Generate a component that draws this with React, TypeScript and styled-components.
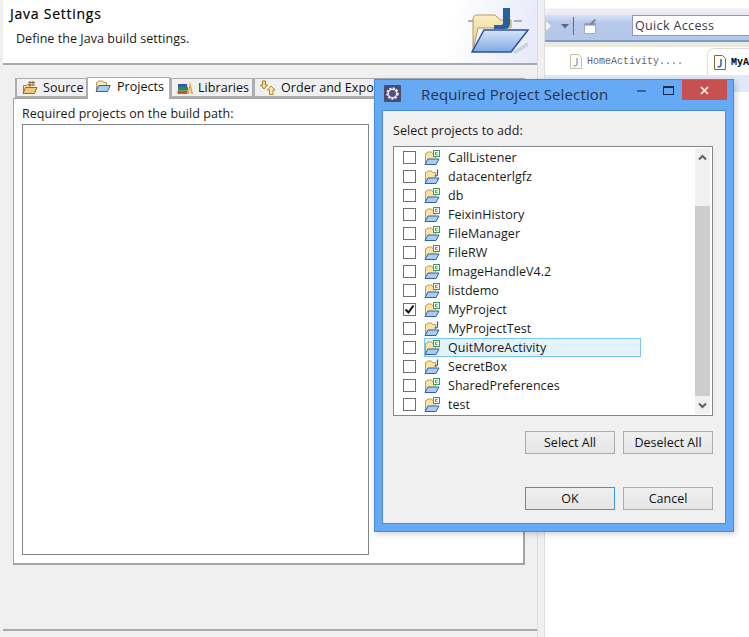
import React from 'react';
import styled, { createGlobalStyle } from 'styled-components';

const Global = createGlobalStyle`
  html, body { margin: 0; padding: 0; background: #fff; }
  body { font-family: "Open Sans", "Noto Sans", sans-serif; font-size: 12.5px; color: #1a1a1a; }
  * { box-sizing: border-box; }
`;

const Screen = styled.div`
  position: relative; width: 749px; height: 637px; overflow: hidden;
  display: flex; background: #fff;
`;

/* ---------- Left wizard page ---------- */
const WizardPane = styled.div`
  width: 538px; height: 637px; flex: none; display: flex; flex-direction: column;
  background: #f0f0f0; border-left: 3px solid #f0f0f0; border-right: 1px solid #dcdcdc;
`;
const Banner = styled.header`
  height: 65px; flex: none; display: flex; justify-content: space-between; padding-left: 7px;
  background: linear-gradient(100deg, #fff 83%, #e6e9f7 100%);
  border-bottom: 2px solid #a9a9a9;
`;
const BannerText = styled.div`
  display: flex; flex-direction: column;
`;
const BannerTitle = styled.div`
  font-weight: 500; font-size: 14px; color: #000; line-height: 18px; margin-top: 5px; letter-spacing: .75px;
  -webkit-text-stroke: .2px #000;
`;
const BannerSub = styled.div`
  line-height: 17px; margin: 7px 0 0 6px; font-size: 12.5px; letter-spacing: .05px;
`;
const BannerArt = styled.div`
  width: 64px; height: 54px; margin: 2px 7px 0 0; flex: none;
`;

const PageBody = styled.div`
  flex: 1; padding: 11px 12px 0 10px; display: flex; flex-direction: column;
`;
const TabRow = styled.div`
  display: flex; align-items: flex-end; height: 22px; margin-left: 2px; position: relative; z-index: 1;
`;
const Tab = styled.div<{ $active?: boolean; $w: number }>`
  width: ${p => p.$w}px; height: ${p => (p.$active ? 22 : 20)}px; flex: none;
  display: flex; align-items: center; gap: ${p => (p.$active ? 6 : 5)}px; padding-left: ${p => (p.$active ? 7 : 5)}px;
  background: ${p => (p.$active ? '#fff' : '#f0f0f0')};
  border: 1px solid #adadad; border-left-width: ${p => (p.$active ? 1 : 2)}px;
  border-bottom: ${p => (p.$active ? 'none' : '2px solid #adadad')};
  margin-bottom: ${p => (p.$active ? -1 : 0)}px;
  color: #111; white-space: nowrap; overflow: hidden; font-size: 12.5px;
  padding-bottom: ${p => (p.$active ? 4 : 0)}px;
  letter-spacing: .05px;
`;
const TabPanel = styled.div`
  height: 467px; background: #fff; border: 1px solid #a3a3a3; border-width: 1px 2px 2px 1px;
  padding: 6px 0 0 8px; display: flex; flex-direction: column; gap: 1px;
`;
const PanelLabel = styled.div`
  line-height: 18px; letter-spacing: .05px;
`;
const ProjectBox = styled.div`
  width: 347px; height: 431px; border: 1px solid #82868b; background: #fff;
`;
const BottomRule = styled.div`
  height: 2px; background: #a9a9a9; margin: 64px -12px 0 -10px;
`;

/* ---------- Right workbench ---------- */
const Sash = styled.div`
  width: 7px; flex: none; background: #f0f0f0; border-right: 1px solid #dcdcdc;
`;
const Workbench = styled.div`
  flex: 1; display: flex; flex-direction: column; min-width: 0;
`;
const TopStrip = styled.div`
  height: 15px; flex: none; background: linear-gradient(#fff 50%, #eef0f4 60%, #e6e9f0);
`;
const Toolbar = styled.div`
  height: 27px; flex: none; display: flex; align-items: flex-start; padding-left: 1px;
  background: linear-gradient(#d8e2f4, #b7c9ea 30%, #b4c7e9);
  border-bottom: 2px solid #7f9bc8;
  gap: 8px;
`;
const ToolGlyphs = styled.div`
  display: flex; align-items: center; height: 24px; width: 53px; flex: none;
`;
const QuickAccess = styled.div`
  width: 117px; height: 21px; background: #fff; border: 1px solid #8f99ab; border-right: none;
  margin-left: 25px; padding-left: 2px; line-height: 19px; font-size: 12.5px; color: #3a3a4a; letter-spacing: .35px;
`;
const Beige = styled.div`
  height: 5px; flex: none; background: #ece9df;
`;
const EditorTabs = styled.div`
  height: 28px; flex: none; background: #fff; display: flex; align-items: flex-end;
`;
const EditorTab = styled.div<{ $active?: boolean }>`
  display: flex; align-items: center; gap: 5px; height: 27px; flex: none;
  font-family: "Liberation Mono", "DejaVu Sans Mono", monospace; font-size: 10px;
  color: ${p => (p.$active ? '#000' : '#666')};
  margin-left: ${p => (p.$active ? 24 : 25)}px;
  padding-left: ${p => (p.$active ? 6 : 0)}px;
  ${p => p.$active && 'border: 1px solid #dcdcdc; border-bottom: none; border-right: none; border-radius: 7px 0 0 0; font-weight: 700;'}
`;
const EditorBar = styled.div`
  height: 17px; flex: none; background: #e0e9f7;
`;
const EditorBody = styled.div`
  flex: 1; background: #fff;
`;

/* ---------- Dialog window ---------- */
const Dialog = styled.div`
  position: absolute; z-index: 2; left: 374px; top: 79px; width: 360px; height: 453px;
  background: #66a9f4; border: 1px solid #4a8cd4; padding: 0 7px 7px 7px;
  display: flex; flex-direction: column;
  box-shadow: 2px 2px 6px rgba(0,0,0,.18);
`;
const TitleBar = styled.div`
  height: 30px; flex: none; display: flex; align-items: flex-start;
`;
const TitleIcon = styled.div`
  width: 17px; height: 17px; margin: 5px 0 0 2px; flex: none;
`;
const TitleText = styled.div`
  margin: 4px 0 0 20px; font-size: 15px; line-height: 20px; color: #24344c; letter-spacing: .14px; white-space: nowrap;
`;
const WindowButtons = styled.div`
  margin-left: auto; display: flex; align-items: flex-start; margin-right: -1px;
`;
const WinBtn = styled.div`
  width: 27px; height: 20px; display: flex; align-items: center; justify-content: center;
`;
const CloseBtn = styled.div`
  width: 45px; height: 20px; background: #c75050; display: flex; align-items: center; justify-content: center;
`;
const DialogBody = styled.div`
  flex: 1; background: #f0f0f0; border: 1px solid #4a8cd4; padding: 11px 11px 0 10px;
  display: flex; flex-direction: column;
`;
const DialogLabel = styled.div`
  line-height: 18px; letter-spacing: .05px; margin-bottom: 6px;
`;
const ListFrame = styled.div`
  height: 270px; width: 320px; flex: none; background: #fff; border: 1px solid #82868b;
  display: flex; padding: 1px 1px 1px 0;
`;
const Rows = styled.div`
  flex: 1; min-width: 0;
`;
const Row = styled.div`
  height: 19px; display: flex; align-items: center; padding-left: 9px;
`;
const Check = styled.div`
  width: 13px; height: 13px; border: 1px solid #707070; background: #fff; flex: none;
  display: flex; align-items: center; justify-content: center; margin-right: 8px;
`;
const Item = styled.div<{ $selected?: boolean }>`
  display: flex; align-items: center; height: 19px; flex: none; width: ${p => (p.$selected ? '217px' : 'auto')};
  background: ${p => (p.$selected ? '#e3f2fb' : 'transparent')};
  outline: ${p => (p.$selected ? '1px solid #7cc4f3' : 'none')};
  outline-offset: -1px;
  gap: 8px; letter-spacing: .05px;
`;
const Scrollbar = styled.div`
  width: 15px; flex: none; background: #f0f0f0; display: flex; flex-direction: column; margin-right: 1px;
`;
const ScrollEnd = styled.div`
  height: 18px; flex: none; display: flex; align-items: center; justify-content: center;
`;
const ScrollGap = styled.div<{ $h: number }>`
  height: ${p => p.$h}px; flex: none;
`;
const ScrollThumb = styled.div`
  flex: 1; background: #cdcdcd;
`;
const ButtonRow = styled.div<{ $top: number }>`
  display: flex; justify-content: flex-end; gap: 8px; margin-top: ${p => p.$top}px;
  width: 320px;
`;
const Btn = styled.div<{ $focus?: boolean }>`
  width: 90px; height: 23px; display: flex; align-items: center; justify-content: center;
  border: 1px solid ${p => (p.$focus ? '#3c95e8' : '#acacac')};
  background: linear-gradient(#f0f0f0, #e5e5e5); font-size: 12.5px; padding-bottom: 1px; color: #111;
`;

/* ---------- Icons ---------- */
const ProjectFolder = ({ kind }: { kind: 'g' | 'j' }) => (
  <svg width="16" height="16" viewBox="0 0 16 16" style={{ flex: 'none' }}>
    <path d="M1.500 13V3.500h1l1-1.500h4l1 1.500h3V8" fill="#fbe3a0" stroke="#c19a4c" strokeWidth="1" />
    <path d="M1 14.500 4 9h11l-3 5.500z" fill="#a9cdf2" stroke="#2f5fa8" strokeWidth="1" />
    {kind === 'g' ? (
      <g fill="#fff" stroke="#3f9a5a" strokeWidth="1">
        <rect x="9.500" y=".5" width="6" height="6" />
        <path d="M13.700 2.300h-2.200v2.400h2.200" fill="none" />
      </g>
    ) : (
      <path d="M13.500 .5v5c0 1.200-1.200 1.500-2.800 1.500" fill="none" stroke="#2f5fa8" strokeWidth="1.300" />
    )}
  </svg>
);

const SourceIcon = () => (
  <svg width="16" height="16" viewBox="0 0 16 16" style={{ flex: 'none' }}>
    <path d="M1.500 13V5.500h3l1-1h2.500V7" fill="#f6dc9e" stroke="#a8763a" />
    <path d="M1 13.500 3.500 7.500H15l-2.500 6z" fill="#f3c67c" stroke="#a8622a" />
    <path d="M8 5V1M11 5V1M6.500 2.500h6.500M6.500 5h6.500" fill="none" stroke="#8a5a2a" strokeWidth="1" />
  </svg>
);
const OpenFolderIcon = () => (
  <svg width="16" height="14" viewBox="0 0 16 14" style={{ flex: 'none' }}>
    <path d="M1.500 11V2.500h1l1-1.500h4l1 1.500h3V5" fill="#fbe9b4" stroke="#b9985a" />
    <path d="M1 11.500 3.700 5.500h11.500l-2.700 6z" fill="#a9cdf2" stroke="#2f5fa8" />
  </svg>
);
const BooksIcon = () => (
  <svg width="16" height="15" viewBox="0 0 16 15" style={{ flex: 'none' }}>
    <rect x=".5" y="10.500" width="10" height="3.500" fill="#b5612a" />
    <rect x="1" y="7" width="10" height="3.500" fill="#2f8a5a" />
    <rect x="1" y="4" width="9" height="3" fill="#2f5fa0" />
    <path d="M10.500 14 13 1.500l3 12.500h-1.500L13 7l-1 7z" fill="#e0a52a" />
  </svg>
);
const OrderIcon = () => (
  <svg width="16" height="16" viewBox="0 0 16 16" style={{ flex: 'none' }}>
    <path d="M2.500 1h3v4h2L4 9 .5 5h2z" fill="#f6dc8a" stroke="#a87a2a" />
    <path d="M11 6l4 4h-2v4.500H9.500V10h-2z" fill="#fbe6a8" stroke="#b8862a" />
  </svg>
);
const GearIcon = () => (
  <svg width="17" height="17" viewBox="0 0 17 17">
    <rect width="17" height="17" rx="1" fill="#4a4a78" />
    <circle cx="8.500" cy="8.500" r="5" fill="none" stroke="#f2f2f4" strokeWidth="2.400" strokeDasharray="2.200 1.100" />
    <circle cx="8.500" cy="8.500" r="4" fill="none" stroke="#f2f2f4" strokeWidth="1.200" />
    <circle cx="8.500" cy="8.500" r="3.200" fill="#55527e" />
  </svg>
);
const JavaFileIcon = ({ dark }: { dark?: boolean }) => (
  <svg width="12" height="15" viewBox="0 0 12 15" style={{ flex: 'none' }}>
    <path d="M.5.5h8l3 3v11H.5z" fill="#fdfcf6" stroke={dark ? '#8a6a2a' : '#c9c0a0'} />
    <path d="M7 4v6c0 1.500-1.500 2-3.500 1.700" fill="none" stroke={dark ? '#2f5fa8' : '#8cacd6'} strokeWidth="1.500" />
  </svg>
);
const BannerFolder = () => (
  <svg width="64" height="54" viewBox="0 0 64 54">
    <defs>
      <linearGradient id="bf" x1="0" y1="0" x2="0" y2="1">
        <stop offset="0" stopColor="#d6e6fa" />
        <stop offset="1" stopColor="#7ea9e2" />
      </linearGradient>
      <linearGradient id="bb" x1="0" y1="0" x2="0" y2="1">
        <stop offset="0" stopColor="#fbeec6" />
        <stop offset="1" stopColor="#e9c878" />
      </linearGradient>
    </defs>
    <path d="M7 49 V18 Q7 13 11 13 H29 L34 18 H45 V26 H12z" fill="url(#bb)" stroke="#b59a5e" />
    <path d="M2 19 H7 M48 19 H56" stroke="#9a9a9a" strokeWidth="1.500" fill="none" />
    <path d="M37 6 H44 V22 Q44 27 38 27 H28 V23 H35 Q37 23 37 21z" fill="#27609c" />
    <path d="M6 50 L18 28 H62 L45 50z" fill="url(#bf)" stroke="#2f4f9f" strokeWidth="1.500" />
    <path d="M45 50 L52 46 L62 40 V44 L50 52z" fill="#9aa0b4" opacity=".35" />
  </svg>
);

const projects: { name: string; kind: 'g' | 'j'; checked?: boolean; selected?: boolean }[] = [
  { name: 'CallListener', kind: 'g' },
  { name: 'datacenterlgfz', kind: 'j' },
  { name: 'db', kind: 'g' },
  { name: 'FeixinHistory', kind: 'g' },
  { name: 'FileManager', kind: 'g' },
  { name: 'FileRW', kind: 'g' },
  { name: 'ImageHandleV4.2', kind: 'g' },
  { name: 'listdemo', kind: 'g' },
  { name: 'MyProject', kind: 'g', checked: true },
  { name: 'MyProjectTest', kind: 'j' },
  { name: 'QuitMoreActivity', kind: 'g', selected: true },
  { name: 'SecretBox', kind: 'j' },
  { name: 'SharedPreferences', kind: 'g' },
  { name: 'test', kind: 'g' },
];

export default function App() {
  return (
    <Screen>
      <Global />
      <WizardPane>
        <Banner>
          <BannerText>
            <BannerTitle>Java Settings</BannerTitle>
            <BannerSub>Define the Java build settings.</BannerSub>
          </BannerText>
          <BannerArt><BannerFolder /></BannerArt>
        </Banner>
        <PageBody>
          <TabRow>
            <Tab $w={72}><SourceIcon />Source</Tab>
            <Tab $w={83} $active><OpenFolderIcon />Projects</Tab>
            <Tab $w={83}><BooksIcon />Libraries</Tab>
            <Tab $w={272}><OrderIcon />Order and Export</Tab>
          </TabRow>
          <TabPanel>
            <PanelLabel>Required projects on the build path:</PanelLabel>
            <ProjectBox />
          </TabPanel>
          <BottomRule />
        </PageBody>
      </WizardPane>
      <Sash />
      <Workbench>
        <TopStrip />
        <Toolbar>
          <ToolGlyphs>
            <svg width="50" height="24" viewBox="0 0 50 24">
              <path d="M0 7h1l4 4-4 4H0z" fill="#f4f4f4" />
              <path d="M15 9h8l-4 4.500z" fill="#5f6878" />
              <path d="M27.500 2v18" stroke="#5f6f88" strokeWidth="1" />
              <path d="M38.500 8.500h11v10h-11z" fill="#fbfbfb" stroke="#a4adbb" />
              <path d="M38.500 8.500h11v2h-11z" fill="#8f98a8" />
              <path d="M44 8l5-4 1 1-4 5z" fill="#7d8794" />
            </svg>
          </ToolGlyphs>
          <QuickAccess>Quick Access</QuickAccess>
        </Toolbar>
        <Beige />
        <EditorTabs>
          <EditorTab><JavaFileIcon />HomeActivity....</EditorTab>
          <EditorTab $active><JavaFileIcon dark />MyA</EditorTab>
        </EditorTabs>
        <EditorBar />
        <EditorBody />
      </Workbench>

      <Dialog>
        <TitleBar>
          <TitleIcon><GearIcon /></TitleIcon>
          <TitleText>Required Project Selection</TitleText>
          <WindowButtons>
            <WinBtn>
              <svg width="9" height="3" viewBox="0 0 9 3" style={{ marginTop: 2 }}><rect width="9" height="2" fill="#3f5f8c" /></svg>
            </WinBtn>
            <WinBtn>
              <svg width="11" height="9" viewBox="0 0 11 9"><rect x=".5" y=".5" width="10" height="8" fill="none" stroke="#1f2a3f" /><rect width="11" height="2" fill="#1f2a3f" /></svg>
            </WinBtn>
            <CloseBtn>
              <svg width="9" height="9" viewBox="0 0 9 9"><path d="M1 1l7 7M8 1l-7 7" stroke="#fff" strokeWidth="1.600" /></svg>
            </CloseBtn>
          </WindowButtons>
        </TitleBar>
        <DialogBody>
          <DialogLabel>Select projects to add:</DialogLabel>
          <ListFrame>
            <Rows>
              {projects.map(p => (
                <Row key={p.name}>
                  <Check>
                    {p.checked && (
                      <svg width="11" height="11" viewBox="0 0 11 11"><path d="M1.500 5.500l3 3 5-7" fill="none" stroke="#111" strokeWidth="2" /></svg>
                    )}
                  </Check>
                  <Item $selected={p.selected}>
                    <ProjectFolder kind={p.kind} />
                    {p.name}
                  </Item>
                </Row>
              ))}
            </Rows>
            <Scrollbar>
              <ScrollEnd>
                <svg width="9" height="7" viewBox="0 0 9 7"><path d="M1 5.500l3.500-3.500 3.500 3.500" fill="none" stroke="#606060" strokeWidth="2" /></svg>
              </ScrollEnd>
              <ScrollGap $h={40} />
              <ScrollThumb />
              <ScrollEnd>
                <svg width="9" height="7" viewBox="0 0 9 7"><path d="M1 1.500l3.500 3.500 3.500-3.500" fill="none" stroke="#606060" strokeWidth="2" /></svg>
              </ScrollEnd>
            </Scrollbar>
          </ListFrame>
          <ButtonRow $top={15}>
            <Btn>Select All</Btn>
            <Btn>Deselect All</Btn>
          </ButtonRow>
          <ButtonRow $top={33}>
            <Btn $focus>OK</Btn>
            <Btn>Cancel</Btn>
          </ButtonRow>
        </DialogBody>
      </Dialog>
    </Screen>
  );
}
